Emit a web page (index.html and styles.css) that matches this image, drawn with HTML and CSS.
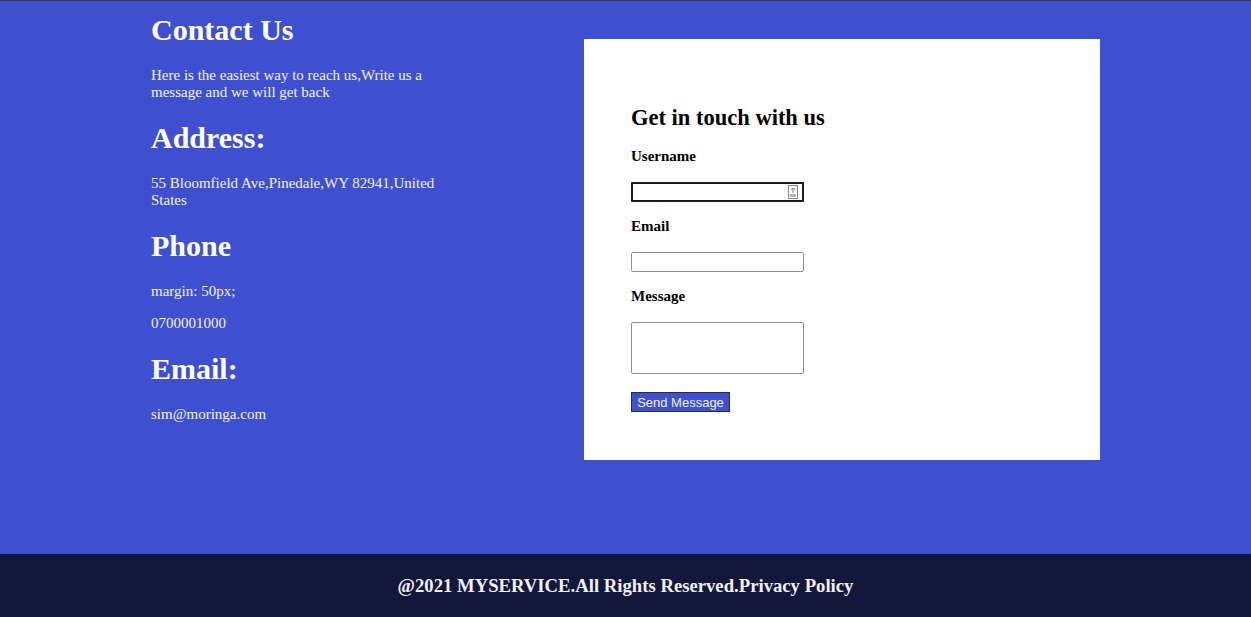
FILE: index.html
```html
<!DOCTYPE html>
<html lang="en">
<head>
<meta charset="utf-8">
<title>Contact Us</title>
<link rel="stylesheet" href="styles.css">
</head>
<body>
<main class="contact">
  <section class="info">
    <h1>Contact Us</h1>
    <p>Here is the easiest way to reach us,Write us a message and we will get back</p>
    <h1>Address:</h1>
    <p>55 Bloomfield Ave,Pinedale,WY 82941,United States</p>
    <h1>Phone</h1>
    <p>margin: 50px;</p>
    <p>0700001000</p>
    <h1>Email:</h1>
    <p>sim@moringa.com</p>
  </section>
  <section class="card">
    <h2>Get in touch with us</h2>
    <form class="form">
      <label class="label" for="username">Username</label>
      <div class="field-wrap">
        <input class="field field-focus" id="username" type="text">
        <svg class="field-icon" width="12" height="14" viewBox="0 0 12 14" aria-hidden="true">
          <rect x="1.5" y="0.5" width="9" height="13" fill="#fff" stroke="#8a8a8a"/>
          <path d="M6 3 L6 8" stroke="#8a8a8a" stroke-width="1.2"/>
          <path d="M4 5 L6 3 L8 5" fill="none" stroke="#8a8a8a" stroke-width="1"/>
          <rect x="3.5" y="9.5" width="5" height="2" fill="#bdbdbd" stroke="#8a8a8a" stroke-width="0.6"/>
        </svg>
      </div>
      <label class="label" for="email">Email</label>
      <input class="field" id="email" type="email">
      <label class="label" for="message">Message</label>
      <textarea class="area" id="message"></textarea>
      <button class="send" type="button">Send Message</button>
    </form>
  </section>
</main>
<footer class="footer">
  <h3>@2021 MYSERVICE.All Rights Reserved.Privacy Policy</h3>
</footer>
</body>
</html>
```
FILE: styles.css
```css
html, body {
  margin: 0;
  padding: 0;
}
body {
  font-family: "Liberation Serif", "Times New Roman", serif;
  font-size: 15px;
  min-height: 100vh;
  box-sizing: border-box;
  border-top: 1px solid #3a3a3a;
  display: flex;
  flex-direction: column;
  background: #3e50d0;
}
.contact {
  flex: 1;
  background: #3e50d0;
  display: flex;
  justify-content: space-between;
  align-items: flex-start;
  padding: 0 151px 0 151px;
}
.info {
  width: 300px;
  color: #f4f4ff;
}
.info h1 {
  font-size: 30px;
  margin: 20px 0;
  color: #ffffff;
}
.info h1:first-child {
  margin-top: 12px;
}
.info p {
  margin: 15px 0;
}
.card {
  width: 516px;
  box-sizing: border-box;
  margin-top: 38px;
  background: #ffffff;
  padding: 66px 47px 48px 47px;
  color: #000;
}
.card h2 {
  font-size: 22.5px;
  margin: 0 0 17px 0;
}
.form {
  display: flex;
  flex-direction: column;
  align-items: flex-start;
}
.label {
  font-weight: bold;
  margin-bottom: 17px;
}
.field-wrap {
  position: relative;
  margin-bottom: 16px;
}
.field {
  width: 173px;
  height: 20px;
  box-sizing: border-box;
  border: 1px solid #8f8f8f;
  border-radius: 2px;
  padding: 1px 2px;
  margin: 0 0 16px 0;
  background: #fff;
  font-size: 13px;
}
.field-wrap .field {
  margin: 0;
  display: block;
}
.field-focus {
  border: 2px solid #1a1a1a;
  border-radius: 1px;
}
.field-icon {
  position: absolute;
  right: 5px;
  top: 3px;
}
.area {
  width: 173px;
  height: 52px;
  box-sizing: border-box;
  border: 1px solid #8f8f8f;
  border-radius: 2px;
  margin: 0 0 18px 0;
  resize: none;
  display: block;
}
.send {
  width: 99px;
  height: 20px;
  box-sizing: border-box;
  background: #3e50d0;
  color: #f2f2ff;
  border: 1px solid #2a2a3a;
  border-radius: 0;
  font-family: "Liberation Sans", Arial, sans-serif;
  font-size: 13px;
  padding: 0;
  line-height: 17px;
}
.footer {
  height: 63px;
  background: #131739;
  display: flex;
  align-items: center;
  justify-content: center;
}
.footer h3 {
  margin: 0;
  font-size: 18.7px;
  color: #f0f0f8;
  font-weight: bold;
}
```
